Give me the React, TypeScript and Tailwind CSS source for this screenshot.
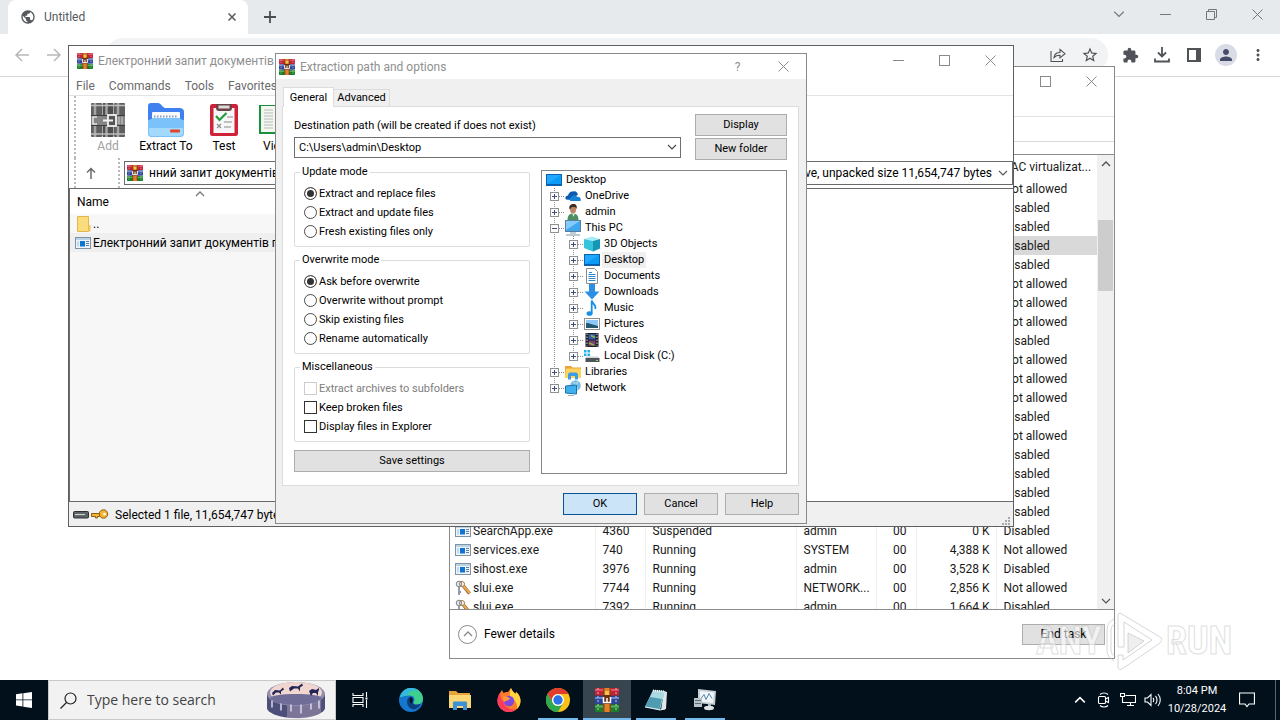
import React, { useState } from 'react';
import { MdExtension, MdMoreVert, MdPerson, MdPublic, MdStarBorder } from 'react-icons/md';

type IconProps = { className?: string };

interface Process {
  name?: string;
  icon?: 'app' | 'key';
  pid?: string;
  status?: string;
  user?: string;
  cpu?: string;
  memory?: string;
  uac: string;
  selected?: boolean;
}

interface TreeNode {
  label: string;
  icon: React.ReactNode;
  depth: number;
  open?: boolean;
  selected?: boolean;
}

/* ---------- Icons ---------- */

const RarIcon = ({ className = 'size-4' }: IconProps) => (
  <svg viewBox="0 0 24 24" className={className}>
    <rect x="0" y="0" width="24" height="7.500" rx="1" fill="#c3213a" />
    <rect x="0" y="1" width="24" height="2" fill="#e0506a" />
    <rect x="0" y="8" width="24" height="8" rx="1" fill="#2c459c" />
    <rect x="0" y="9" width="24" height="2" fill="#6b86d4" />
    <rect x="0" y="16.500" width="24" height="7.500" rx="1" fill="#17802c" />
    <rect x="0" y="17.500" width="24" height="2" fill="#4fb35f" />
    <path d="M3 0v24M21 0v24" stroke="#d9c79a" strokeWidth="1" strokeDasharray="2 2" />
    <rect x="8" y="0" width="8" height="24" fill="#8f4513" />
    <rect x="9.500" y="0" width="5" height="24" fill="#e0802c" />
    <rect x="8" y="7" width="8" height="9" fill="#6d2f12" />
    <path d="M8.500 9v5.500h7V9M12 10v4" fill="none" stroke="#fff" strokeWidth="1.500" />
    <rect x="10" y="3" width="4" height="4" fill="#f5c34a" />
  </svg>
);

const AppIcon = () => (
  <svg viewBox="0 0 16 12" className="h-3 w-4 shrink-0">
    <rect x="0.5" y="0.5" width="15" height="11" fill="#eef4f9" stroke="#7f93a3" />
    <rect x="1" y="1" width="14" height="2" fill="#bcd3e6" />
    <rect x="5" y="4" width="5" height="5.5" fill="#0f74d1" />
    <path d="M11 4.5h3M11 6.5h3M11 8.5h3" stroke="#5b7fa0" />
    <rect x="2" y="4" width="2" height="5.5" fill="#bcdcf4" />
  </svg>
);

const KeyIcon = () => (
  <svg viewBox="0 0 16 16" className="size-4 shrink-0">
    <circle cx="4" cy="4" r="2.8" fill="#e2e5ec" stroke="#7c8296" />
    <path d="M4 7v8M4 12h2" stroke="#8b90a6" strokeWidth="1.8" />
    <circle cx="7" cy="4" r="2.5" fill="none" stroke="#9a7a45" />
    <path d="M8.5 6l6 7.5" stroke="#8a5a22" strokeWidth="3.4" />
    <path d="M8.5 6l6 7" stroke="#f1ab55" strokeWidth="2" />
  </svg>
);

const ChevronDown = ({ className = 'size-2.5' }: IconProps) => (
  <svg viewBox="0 0 10 10" className={className}>
    <path d="M1 3l4 4 4-4" fill="none" stroke="currentColor" strokeWidth="1.1" />
  </svg>
);

const ChevronUp = ({ className = 'size-2.5' }: IconProps) => (
  <svg viewBox="0 0 10 10" className={className}>
    <path d="M1 7l4-4 4 4" fill="none" stroke="currentColor" strokeWidth="1.3" />
  </svg>
);

const CloseGlyph = ({ className = 'size-[11px]' }: IconProps) => (
  <svg viewBox="0 0 11 11" className={className}>
    <path d="M0.5 0.5l10 10M10.5 0.5l-10 10" stroke="currentColor" strokeWidth="1" />
  </svg>
);

const MaxGlyph = () => (
  <svg viewBox="0 0 11 11" className="size-[11px]">
    <rect x="0.5" y="0.5" width="10" height="10" fill="none" stroke="currentColor" />
  </svg>
);

const MinGlyph = () => (
  <svg viewBox="0 0 11 11" className="size-[11px]">
    <path d="M0 5.5h11" stroke="currentColor" />
  </svg>
);

const RestoreGlyph = () => (
  <svg viewBox="0 0 11 11" className="size-[11px]">
    <path d="M0.5 2.5h8v8h-8zM2.5 2.5v-2h8v8h-2" fill="none" stroke="currentColor" />
  </svg>
);

const MonitorIcon = () => (
  <svg viewBox="0 0 16 16" className="size-4">
    <rect x="0.5" y="2.5" width="15" height="11" fill="#0a9bf7" stroke="#0a62b0" />
    <path d="M1 3h14L1 12z" fill="#22a9ff" />
    <path d="M1 12.5h14" stroke="#0a5ca8" />
  </svg>
);

const ComputerIcon = () => (
  <svg viewBox="0 0 16 16" className="size-4">
    <rect x="0.5" y="0.5" width="15" height="11" fill="#3fa7ee" stroke="#5c7f9b" />
    <path d="M1 1h14L1 10z" fill="#84cbfb" />
    <path d="M5 13h6" stroke="#a9bac7" strokeWidth="1.4" />
    <path d="M1 15h14" stroke="#7d95a7" />
  </svg>
);

const CloudIcon = () => (
  <svg viewBox="0 0 16 16" className="size-4">
    <path d="M1 11.500c-1.500-2 0-3.600 2-4C3.500 5 5.500 3 8 3.500c2-1 4 0 5 3L6 12z" fill="#0b5cad" />
    <path d="M5.500 13C4 12 4.500 9.500 6.500 9.300 7 7 10.500 6.500 12 8.800c3-.3 4.500 1.700 3.500 4.200z" fill="#1683d8" />
  </svg>
);

const UserIcon = () => (
  <svg viewBox="0 0 16 16" className="size-4">
    <path d="M2.500 16c0-4 1.500-6.500 5.500-6.500s5.500 2.500 5.500 6.500z" fill="#4c8f63" />
    <path d="M7 9l1.500 4L10 9z" fill="#dfeee3" />
    <ellipse cx="8" cy="5.500" rx="3" ry="4" fill="#b98562" />
    <path d="M4.500 5.500C3.500 1.500 6 0 8.500 0S12.500 2 11.500 5L10 3H7z" fill="#3e2c20" />
  </svg>
);

const CubeIcon = () => (
  <svg viewBox="0 0 16 16" className="size-4">
    <path d="M0 3l8-2.500L16 3 9 5z" fill="#a7ecf3" />
    <path d="M0 3l9 2v10.500L0 12z" fill="#36c3dc" />
    <path d="M9 5l7-2v9.500l-7 3z" fill="#1596b5" />
  </svg>
);

const DocumentIcon = () => (
  <svg viewBox="0 0 16 16" className="size-4">
    <path d="M2.500 0.500h8l3 3v12h-11z" fill="#fff" stroke="#8b8b8b" />
    <path d="M5 4.500h3M4.500 6.500h7M4.500 8.500h7M4.500 10.500h7M4.500 12.500h7" stroke="#2a86cf" />
  </svg>
);

const DownloadIcon = () => (
  <svg viewBox="0 0 16 16" className="size-4">
    <path d="M5 0h6v7.500h4.500L8 15.500.5 7.500H5z" fill="#2b8fe4" />
  </svg>
);

const MusicIcon = () => (
  <svg viewBox="0 0 16 16" className="size-4">
    <ellipse cx="5.500" cy="13.500" rx="3" ry="2.300" fill="#1590e6" />
    <path d="M7.700 13.500V0.500c.5 3.500 5 4 3.500 8.500" fill="none" stroke="#1590e6" strokeWidth="1.800" />
  </svg>
);

const PictureIcon = () => (
  <svg viewBox="0 0 16 16" className="size-4">
    <rect x="0.500" y="2.500" width="15" height="11" fill="#fff" stroke="#8f8f8f" />
    <rect x="2" y="4" width="12" height="8" fill="#8ccaf5" />
    <path d="M2 7c4 0 7 2 12 3v2H2z" fill="#27566f" />
  </svg>
);

const VideoIcon = () => (
  <svg viewBox="0 0 16 16" className="size-4">
    <rect x="1.500" y="1" width="13" height="14" fill="#1c1c24" />
    <path d="M3 1.500v13M13 1.500v13" stroke="#d8d8d8" strokeDasharray="1.500 1.500" />
    <rect x="4.500" y="2" width="7" height="5.500" fill="#3b56a8" />
    <rect x="4.500" y="8.500" width="7" height="5.500" fill="#7a3e74" />
    <path d="M7 3.500l4 2M5 11l5 2" stroke="#7fbf3f" strokeWidth="1.500" />
  </svg>
);

const DiskIcon = () => (
  <svg viewBox="0 0 16 16" className="size-4">
    <path d="M0 2h2.500v2.500H0zM3.500 2H6v2.500H3.500zM0 5.500h2.500V8H0zM3.500 5.500H6V8H3.500z" fill="#22b1e6" />
    <path d="M2 8.500h12l1.500 2h-14z" fill="#cfd4d8" />
    <rect x="1.500" y="10" width="14" height="4" fill="#4d555b" />
    <path d="M12 12.500h2" stroke="#6be06b" />
  </svg>
);

const FolderIcon = () => (
  <svg viewBox="0 0 16 16" className="size-4">
    <path d="M0 2h6l1.500 1.500H16V14H0z" fill="#e9a43a" />
    <path d="M1 4.500h15V14H0z" fill="#ffd45e" />
    <path d="M3 15.500V11c0-1.500 1-2.500 2-2.500h6c1 0 2 1 2 2.500v4.500h-3V12H6v3.500z" fill="#3b9de6" />
  </svg>
);

const NetworkIcon = () => (
  <svg viewBox="0 0 16 16" className="size-4">
    <circle cx="10.500" cy="5.500" r="5.300" fill="#79bde0" />
    <path d="M8 2c3 1 3 5 1 8M13 1.500c-2 2-2 6 0 8" stroke="#d6edf7" fill="none" />
    <path d="M0.500 6l11-1v9l-11-1z" fill="#3fb0ec" stroke="#1673b0" />
    <path d="M3 15.500h6" stroke="#9fb4c0" />
  </svg>
);

/* ---------- Chrome ---------- */

const ChromeWindow = () => (
  <div className="flex flex-1 flex-col">
    <div className="flex h-[34px] items-stretch justify-between bg-[#e7eaed]">
      <div className="flex items-end pl-2">
        <div className="flex h-[34px] w-60 items-center gap-2 rounded-t-lg bg-white pl-3 pr-2.5 text-[#55595e]">
          <MdPublic className="size-4" />
          <span className="flex-1 text-xs">Untitled</span>
          <button aria-label="Close tab" className="flex size-3 items-center justify-center">
            <svg viewBox="0 0 8 8" className="size-2">
              <path d="M0.500 0.500l7 7M7.500 0.500l-7 7" stroke="currentColor" strokeWidth="1.500" />
            </svg>
          </button>
        </div>
        <button aria-label="New tab" className="flex h-[34px] w-11 items-center justify-center text-[#4a4e52]">
          <svg viewBox="0 0 12 12" className="size-3">
            <path d="M6 0v12M0 6h12" stroke="currentColor" strokeWidth="1.800" />
          </svg>
        </button>
      </div>
      <div className="flex h-7 text-[#73777b]">
        <button aria-label="Search tabs" className="flex w-[46px] items-center justify-center">
          <ChevronDown className="size-3" />
        </button>
        <button aria-label="Minimize" className="flex w-[46px] items-center justify-center"><MinGlyph /></button>
        <button aria-label="Restore" className="flex w-[46px] items-center justify-center"><RestoreGlyph /></button>
        <button aria-label="Close" className="flex w-[46px] items-center justify-center"><CloseGlyph /></button>
      </div>
    </div>

    <div className="flex h-[43px] items-center border-b border-[#d5d7da] bg-white pl-1.5 pr-1.5 text-[#4f5357]">
      <div className="flex text-[#b5b8bb]">
        <button aria-label="Back" className="flex size-8 items-center justify-center">
          <svg viewBox="0 0 14 14" className="size-[14px]">
            <path d="M14 7H1.500M7 1L1 7l6 6" fill="none" stroke="currentColor" strokeWidth="1.500" />
          </svg>
        </button>
        <button aria-label="Forward" className="flex size-8 items-center justify-center">
          <svg viewBox="0 0 14 14" className="size-[14px]">
            <path d="M0 7h12.500M7 1l6 6-6 6" fill="none" stroke="currentColor" strokeWidth="1.500" />
          </svg>
        </button>
      </div>
      <div className="ml-9 flex h-[34px] flex-1 items-center justify-end rounded-full bg-[#f1f3f4] pr-0.5">
        <button aria-label="Share" className="flex size-8 items-center justify-center">
          <svg viewBox="0 0 16 14" className="h-[14px] w-4" fill="none" stroke="currentColor" strokeWidth="1.100">
            <path d="M1 3v10.500h11.500V11" />
            <path d="M4 9.500C4.500 6 6.500 4.500 10 4.500V1.500l5 4.200-5 4.200V7.300C7.500 7.200 5.500 8 4 9.500z" />
          </svg>
        </button>
        <button aria-label="Bookmark" className="flex size-8 items-center justify-center">
          <MdStarBorder className="size-[18px]" />
        </button>
      </div>
      <div className="ml-1.5 flex">
        <button aria-label="Extensions" className="flex size-8 items-center justify-center">
          <MdExtension className="size-[17px]" />
        </button>
        <button aria-label="Downloads" className="flex size-8 items-center justify-center">
          <svg viewBox="0 0 16 16" className="size-4" fill="none" stroke="currentColor" strokeWidth="1.800">
            <path d="M8 0v9M4 5.500l4 4 4-4M1 11.500v3h14v-3" />
          </svg>
        </button>
        <button aria-label="Side panel" className="flex size-8 items-center justify-center">
          <svg viewBox="0 0 14 14" className="size-[14px]">
            <path d="M1 1h12v12H1z" fill="none" stroke="currentColor" strokeWidth="2" />
            <path d="M9 0h5v14H9z" fill="currentColor" />
          </svg>
        </button>
        <button aria-label="Profile" className="flex size-8 items-center justify-center">
          <span className="flex size-[22px] items-center justify-center rounded-full bg-[#dadce5]">
            <MdPerson className="size-[18px] text-[#454a6b]" />
          </span>
        </button>
        <button aria-label="Menu" className="flex size-8 items-center justify-center">
          <MdMoreVert className="size-[18px]" />
        </button>
      </div>
    </div>
  </div>
);

/* ---------- Task Manager ---------- */

const processes: Process[] = [
  { uac: 'Not allowed' },
  { uac: 'Disabled' },
  { uac: 'Disabled' },
  { uac: 'Disabled', selected: true },
  { uac: 'Disabled' },
  { uac: 'Not allowed' },
  { uac: 'Not allowed' },
  { uac: 'Not allowed' },
  { uac: 'Disabled' },
  { uac: 'Not allowed' },
  { uac: 'Not allowed' },
  { uac: 'Not allowed' },
  { uac: 'Disabled' },
  { uac: 'Not allowed' },
  { uac: 'Disabled' },
  { uac: 'Disabled' },
  { uac: 'Disabled' },
  { uac: 'Disabled' },
  { name: 'SearchApp.exe', icon: 'app', pid: '4360', status: 'Suspended', user: 'admin', cpu: '00', memory: '0 K', uac: 'Disabled' },
  { name: 'services.exe', icon: 'app', pid: '740', status: 'Running', user: 'SYSTEM', cpu: '00', memory: '4,388 K', uac: 'Not allowed' },
  { name: 'sihost.exe', icon: 'app', pid: '3976', status: 'Running', user: 'admin', cpu: '00', memory: '3,528 K', uac: 'Disabled' },
  { name: 'slui.exe', icon: 'key', pid: '7744', status: 'Running', user: 'NETWORK...', cpu: '00', memory: '2,856 K', uac: 'Not allowed' },
  { name: 'slui.exe', icon: 'key', pid: '7392', status: 'Running', user: 'admin', cpu: '00', memory: '1,664 K', uac: 'Disabled' },
];

const TaskManagerWindow = () => (
  <section className="absolute left-[449px] top-[66px] flex w-[666px] flex-col border border-[#8a8a8a] bg-white">
    <div className="flex h-[50px] items-start justify-end border-b border-[#e3e3e3] text-[#8a8a8a]">
      <button aria-label="Maximize" className="flex h-7 w-[46px] items-center justify-center"><MaxGlyph /></button>
      <button aria-label="Close" className="flex h-7 w-[46px] items-center justify-center"><CloseGlyph /></button>
    </div>
    <div className="h-[25px] border-b border-[#d9d9d9]" />
    <div className="h-3" />
    <div className="flex h-[456px] border-y border-[#8c8c8c]">
      <div className="flex-1 overflow-hidden">
        <table className="w-full table-fixed text-xs text-[#1a1a1a]">
          <colgroup>
            <col className="w-[145px]" />
            <col className="w-[50px]" />
            <col className="w-[151px]" />
            <col className="w-20" />
            <col className="w-10" />
            <col className="w-20" />
            <col />
          </colgroup>
          <thead>
            <tr className="h-6">
              <th colSpan={6} />
              <th className="whitespace-nowrap p-0 pl-[7px] text-left font-normal">UAC virtualizat...</th>
            </tr>
          </thead>
          <tbody>
            {processes.map((p, i) => (
              <tr key={i} className={p.selected ? 'h-[19px] bg-[#d9d9d9]' : 'h-[19px]'}>
                <td className="border-r border-[#efefef] p-0 pl-[5px]">
                  <div className="flex h-[19px] items-center gap-0.5">
                    {p.icon === 'app' && <AppIcon />}
                    {p.icon === 'key' && <KeyIcon />}
                    {p.name}
                  </div>
                </td>
                <td className="border-r border-[#efefef] p-0 pl-[7px]">{p.pid}</td>
                <td className="border-r border-[#efefef] p-0 pl-[7px]">{p.status}</td>
                <td className="border-r border-[#efefef] p-0 pl-[7px]">{p.user}</td>
                <td className="border-r border-[#efefef] p-0 pr-[9px] text-right">{p.cpu}</td>
                <td className="border-r border-[#efefef] p-0 pr-1.5 text-right">{p.memory}</td>
                <td className="p-0 pl-[7px]">{p.uac}</td>
              </tr>
            ))}
          </tbody>
        </table>
      </div>
      <div className="flex w-[17px] flex-col items-center bg-[#f0f0f0] text-[#505050]">
        <span className="flex h-[17px] items-center"><ChevronUp /></span>
        <span className="mt-12 h-[71px] w-[15px] bg-[#cdcdcd]" />
        <span className="mt-auto flex h-[17px] items-center"><ChevronDown /></span>
      </div>
    </div>
    <div className="flex h-12 items-center justify-between pl-2 pr-[9px] text-xs">
      <button className="flex items-center gap-[7px]">
        <span className="flex size-[19px] items-center justify-center rounded-full border border-[#8a8a8a] text-[#8a8a8a]">
          <ChevronUp />
        </span>
        Fewer details
      </button>
      <button className="h-[21px] w-[83px] border border-[#adadad] bg-[#e1e1e1]">End task</button>
    </div>
  </section>
);

/* ---------- WinRAR ---------- */

const AddArt = () => (
  <svg viewBox="0 0 34 34" className="size-[34px]">
    <rect x="0" y="0" width="11" height="34" rx="1" fill="#5f5f5f" />
    <rect x="11.500" y="0" width="11" height="34" rx="1" fill="#4f4f4f" />
    <rect x="23" y="0" width="11" height="34" rx="1" fill="#5f5f5f" />
    <path d="M4 0v34M15.500 0v34M27 0v34" stroke="#a5a5a5" strokeWidth="2.500" />
    <path d="M0 2.500h34M0 31h34" stroke="#bdbdbd" strokeWidth="1.500" />
    <rect x="0" y="12" width="34" height="11" fill="#858585" />
    <path d="M0 12.500h34M0 22.500h34" stroke="#3d3d3d" />
    <path d="M6 14H2v7h4" fill="none" stroke="#e4e4e4" strokeWidth="1.500" />
    <rect x="17" y="12" width="8" height="11" fill="#555" stroke="#f2f2f2" strokeWidth="1.800" />
    <path d="M12 17.500h10" stroke="#f2f2f2" strokeWidth="2" />
    <path d="M28 14v7M31 14v7" stroke="#d0d0d0" />
  </svg>
);

const ExtractArt = () => (
  <svg viewBox="0 0 36 34" className="h-[34px] w-9">
    <path d="M0 3c0-2 1-3 3-3h7c3 0 4 4 7 5h14c3 0 5 1 5 4v14H0z" fill="#3f7ff0" />
    <rect x="4" y="9" width="28" height="10" rx="1" fill="#f7f9fd" />
    <path d="M6 13.500h24" stroke="#8f9db8" strokeWidth="2" strokeDasharray="1.500 1.500" />
    <path d="M0 17c3 0 3-2 6-2h24c3 0 3 2 6 2v13c0 3-1 4-4 4H4c-3 0-4-1-4-4z" fill="#7cc2fa" />
    <path d="M1 25h34v5c0 2-1 3-3 3H4c-2 0-3-1-3-3z" fill="#a3d9fd" />
    <rect x="22" y="26.500" width="10" height="3" rx="1" fill="#e04628" />
  </svg>
);

const TestArt = () => (
  <svg viewBox="0 0 28 34" className="h-[34px] w-7">
    <rect x="0" y="1" width="28" height="32" rx="2.500" fill="#cf2138" />
    <rect x="3.500" y="5" width="21" height="25" fill="#f7f7f7" />
    <path d="M6 1h16v4c0 2-1 3-3 3H9c-2 0-3-1-3-3z" fill="#6d4348" />
    <path d="M8.500 2.500h11v3h-11z" fill="#dcdcdc" />
    <path d="M6 13l3.500 4 7-7" fill="none" stroke="#249a3c" strokeWidth="2.200" />
    <path d="M17 14h6M14 19h8M14 24h7M7 21l4 4M11 21l-4 4" stroke="#8c8c8c" strokeWidth="1.200" />
  </svg>
);

const ViewArt = () => (
  <svg viewBox="0 0 34 34" className="size-[34px]">
    <path d="M0 2h34v29H0z" fill="#18913a" />
    <path d="M2 3h14v26H2zM18 3h14v26H18z" fill="#f4f6f1" />
    <path d="M5 7h9M5 10h9M5 13h9M5 16h9M5 19h9M5 22h9M5 25h9" stroke="#b4bdb4" />
  </svg>
);

const toolbar = [
  { label: 'Add', art: <AddArt />, width: 'w-[58px]', disabled: true },
  { label: 'Extract To', art: <ExtractArt />, width: 'w-[58px]' },
  { label: 'Test', art: <TestArt />, width: 'w-[58px]' },
  { label: 'View', art: <ViewArt />, width: 'w-[46px]' },
];

const WinRarWindow = () => (
  <section className="absolute left-[68px] top-[45px] flex w-[946px] flex-col border border-[#5f5f5f] bg-white">
    <header className="flex h-[30px] items-center">
      <h1 className="flex flex-1 items-center gap-[5px] pl-2 text-xs text-[#8f8f8f]">
        <RarIcon />
        Електронний запит документів по
      </h1>
      <div className="flex h-7 self-start text-[#8a8a8a]">
        <button aria-label="Minimize" className="flex w-[46px] items-center justify-center"><MinGlyph /></button>
        <button aria-label="Maximize" className="flex w-[46px] items-center justify-center"><MaxGlyph /></button>
        <button aria-label="Close" className="flex w-[46px] items-center justify-center"><CloseGlyph /></button>
      </div>
    </header>
    <nav className="flex h-5 items-center gap-3.5 border-b border-[#e3e3e3] pl-[7px] text-xs text-[#6a6a6a]">
      {['File', 'Commands', 'Tools', 'Favorites'].map((item) => (
        <button key={item}>{item}</button>
      ))}
    </nav>

    <div className="flex h-[62px] pl-[5px]">
      <div className="border-l-2 border-dotted border-[#b9b9b9]" />
      <div className="flex pl-[3px] pt-[7px]">
        {toolbar.map((t) => (
          <button
            key={t.label}
            disabled={t.disabled}
            className={`flex flex-col items-center whitespace-nowrap text-xs leading-[18px] disabled:text-[#a0a0a0] ${t.width}`}
          >
            {t.art}
            {t.label}
          </button>
        ))}
      </div>
    </div>

    <div className="flex h-[30px] pl-[5px]">
      <div className="border-l-2 border-dotted border-[#b9b9b9]" />
      <button aria-label="Up" className="flex w-[30px] items-center justify-center text-[#6a6a6a]">
        <svg viewBox="0 0 10 12" className="h-3 w-2.5">
          <path d="M5 12V1.500M1 5.500l4-4 4 4" fill="none" stroke="currentColor" strokeWidth="1.500" />
        </svg>
      </button>
      <div className="ml-3 border-l-2 border-dotted border-[#b9b9b9]" />
      <div className="ml-1 mt-[3px] flex h-6 flex-1 items-center border border-[#6a6a6a] pl-0.5 pr-1 text-xs">
        <RarIcon />
        <select aria-label="Archive" className="ml-1.5 flex-1 appearance-none outline-none">
          <option>нний запит документів по</option>
        </select>
        <span>archive, unpacked size 11,654,747 bytes</span>
        <ChevronDown className="ml-1.5 size-2.5 text-[#555]" />
      </div>
    </div>

    <div className="flex h-[314px] border-y border-[#6a6a6a]">
      <div className="w-[440px] border-l border-[#6a6a6a] bg-[#f7f7f7]">
        <div className="relative h-[25px] bg-white pl-[7px] pt-[5px] text-xs">
          Name
          <ChevronUp className="absolute left-[125px] top-0 size-2.5 text-[#777]" />
        </div>
        <div className="flex h-[19px] items-center gap-0.5 pl-[7px] text-xs">
          <svg viewBox="0 0 14 16" className="h-4 w-[14px]">
            <path d="M0.500 0.500h11v15h-11z" fill="#fbdc7c" stroke="#e2b64a" />
            <path d="M11.500 9h2v6.500h-2z" fill="#efc65b" />
          </svg>
          ..
        </div>
        <div className="flex h-[19px] items-center gap-0.5 bg-[#efefef] pl-[5px] text-xs">
          <AppIcon />
          Електронний запит документів по
        </div>
      </div>
      <div className="flex-1 bg-white" />
    </div>

    <footer className="flex h-6 items-center bg-[#f0f0f0] pl-1 pt-0.5 text-xs">
      <svg viewBox="0 0 16 8" className="h-2 w-4">
        <rect x="0.500" y="0.500" width="15" height="6.500" rx="1" fill="#5d6468" stroke="#2c3033" />
        <path d="M2 3.500h10" stroke="#d4d8da" />
      </svg>
      <svg viewBox="0 0 18 12" className="ml-0.5 h-3 w-[18px]">
        <circle cx="12.500" cy="5" r="4.200" fill="#f2b632" stroke="#8b5d10" />
        <path d="M0.500 4.500h8v3h-2v1.500h-2V7.500h-4z" fill="#f2b632" stroke="#8b5d10" />
        <circle cx="13.500" cy="5" r="1.300" fill="#fff" />
      </svg>
      <span className="ml-1.5 flex-1">Selected 1 file, 11,654,747 bytes</span>
      <svg viewBox="0 0 10 10" className="mr-0.5 size-2.5 self-end fill-[#a8a8a8]">
        <path d="M7 1h2v2H7zM4 4h2v2H4zM7 4h2v2H7zM1 7h2v2H1zM4 7h2v2H4zM7 7h2v2H7z" />
      </svg>
    </footer>
  </section>
);

/* ---------- Extraction dialog ---------- */

const tree: TreeNode[] = [
  { label: 'Desktop', icon: <MonitorIcon />, depth: 0 },
  { label: 'OneDrive', icon: <CloudIcon />, depth: 1 },
  { label: 'admin', icon: <UserIcon />, depth: 1 },
  { label: 'This PC', icon: <ComputerIcon />, depth: 1, open: true },
  { label: '3D Objects', icon: <CubeIcon />, depth: 2 },
  { label: 'Desktop', icon: <MonitorIcon />, depth: 2, selected: true },
  { label: 'Documents', icon: <DocumentIcon />, depth: 2 },
  { label: 'Downloads', icon: <DownloadIcon />, depth: 2 },
  { label: 'Music', icon: <MusicIcon />, depth: 2 },
  { label: 'Pictures', icon: <PictureIcon />, depth: 2 },
  { label: 'Videos', icon: <VideoIcon />, depth: 2 },
  { label: 'Local Disk (C:)', icon: <DiskIcon />, depth: 2 },
  { label: 'Libraries', icon: <FolderIcon />, depth: 1 },
  { label: 'Network', icon: <NetworkIcon />, depth: 1 },
];

const Expander = ({ open, last }: { open?: boolean; last?: boolean }) => (
  <svg viewBox="0 0 15 16" className="h-4 w-[15px]" fill="none">
    <path d={last ? 'M4.500 0v8' : 'M4.500 0v16'} stroke="#8c8c8c" strokeDasharray="1 1" />
    <path d="M9 8.500h6" stroke="#8c8c8c" strokeDasharray="1 1" />
    <rect x="0.500" y="4.500" width="8" height="8" fill="#fbfbfb" stroke="#919191" />
    <path d={open ? 'M2 8.500h5' : 'M2 8.500h5M4.500 6v5'} stroke="#44507c" />
  </svg>
);

const FolderTree = () => (
  <ul className="mt-2.5 flex-1 border border-[#82868b] pl-1 pt-px">
    {tree.map((node, i) => (
      <li key={i} className="flex h-4 items-center">
        {node.depth > 0 && <span className="w-1" />}
        {node.depth === 2 && (
          <svg viewBox="0 0 19 16" className="h-4 w-[19px]">
            <path d="M4.500 0v16" stroke="#8c8c8c" strokeDasharray="1 1" />
          </svg>
        )}
        {node.depth > 0 && <Expander open={node.open} last={i === 11 || i === 13} />}
        {node.icon}
        <span className={node.selected ? 'ml-0.5 bg-[#f0f0f0] px-0.5' : 'ml-0.5 px-0.5'}>{node.label}</span>
      </li>
    ))}
  </ul>
);

const Group = ({ title, children }: { title: string; children: React.ReactNode }) => (
  <fieldset className="rounded-[2px] border border-[#dcdcdc] pb-[5px] pl-[9px]">
    <legend className="-ml-1 px-0.5 leading-4">{title}</legend>
    <div className="pt-1">{children}</div>
  </fieldset>
);

const Radio = ({ name, label, checked }: { name: string; label: string; checked?: boolean }) => (
  <label className="flex h-[19px] items-center gap-0.5">
    <input
      type="radio"
      name={name}
      defaultChecked={checked}
      className="size-[13px] appearance-none rounded-full border border-[#4a4a4a] checked:bg-[#333] checked:shadow-[inset_0_0_0_2px_white]"
    />
    {label}
  </label>
);

const Check = ({ label, disabled }: { label: string; disabled?: boolean }) => (
  <label className={disabled ? 'flex h-[19px] items-center gap-0.5 text-[#7d7d7d]' : 'flex h-[19px] items-center gap-0.5'}>
    <input
      type="checkbox"
      disabled={disabled}
      className="size-[13px] appearance-none border border-[#333] bg-white disabled:border-[#cccccc]"
    />
    {label}
  </label>
);

const buttonClass = 'h-[22px] border border-[#adadad] bg-[#e1e1e1] text-center';

const ExtractDialog = () => {
  const [tab, setTab] = useState('General');

  return (
    <section
      role="dialog"
      aria-label="Extraction path and options"
      className="absolute left-[275px] top-[53px] flex w-[532px] flex-col border border-[#8a8a8a] bg-[#f0f0f0] text-[11px] leading-4 text-black"
    >
      <header className="flex h-[25px] items-center bg-white pl-[3px] text-xs text-[#8f8f8f]">
        <RarIcon />
        <h2 className="ml-[5px] flex-1">Extraction path and options</h2>
        <button aria-label="Help" className="w-[45px]">?</button>
        <button aria-label="Close" className="flex w-[46px] justify-center"><CloseGlyph /></button>
      </header>

      <div className="pb-2 pl-1.5 pr-[7px] pt-2">
        <div role="tablist" className="flex items-end pl-px">
          {['General', 'Advanced'].map((t) => (
            <button
              key={t}
              role="tab"
              aria-selected={tab === t}
              onClick={() => setTab(t)}
              className={
                tab === t
                  ? 'relative -mb-px h-5 w-[51px] border border-b-0 border-[#dcdcdc] bg-white'
                  : 'h-[17px] w-14 border border-b-0 border-l-0 border-[#dcdcdc]'
              }
            >
              {t}
            </button>
          ))}
        </div>

        <div className="border border-[#dcdcdc] bg-white px-[11px] pb-[11px] pt-[7px]">
          <div className="flex gap-3.5">
            <div className="flex flex-1 flex-col justify-end pb-0.5">
              <label htmlFor="dest" className="mb-[3px]">Destination path (will be created if does not exist)</label>
              <div className="relative">
                <select
                  id="dest"
                  className="block h-[21px] w-full appearance-none border border-[#6f6f6f] bg-white pl-1 outline-none"
                >
                  <option>C:\Users\admin\Desktop</option>
                </select>
                <ChevronDown className="pointer-events-none absolute right-1 top-[5px] size-2.5 text-[#444]" />
              </div>
            </div>
            <div className="flex w-[92px] flex-col gap-0.5">
              <button className={buttonClass}>Display</button>
              <button className={buttonClass}>New folder</button>
            </div>
          </div>

          <div className="flex gap-[11px]">
            <div className="flex w-[236px] flex-col gap-[5px] pt-1">
              <Group title="Update mode">
                <Radio name="update" label="Extract and replace files" checked />
                <Radio name="update" label="Extract and update files" />
                <Radio name="update" label="Fresh existing files only" />
              </Group>
              <Group title="Overwrite mode">
                <Radio name="overwrite" label="Ask before overwrite" checked />
                <Radio name="overwrite" label="Overwrite without prompt" />
                <Radio name="overwrite" label="Skip existing files" />
                <Radio name="overwrite" label="Rename automatically" />
              </Group>
              <Group title="Miscellaneous">
                <Check label="Extract archives to subfolders" disabled />
                <Check label="Keep broken files" />
                <Check label="Display files in Explorer" />
              </Group>
              <div className="flex flex-col pb-0.5 pt-[3px]">
                <button className={buttonClass}>Save settings</button>
              </div>
            </div>
            <FolderTree />
          </div>
        </div>

        <div className="flex justify-end gap-[7px] pt-[7px]">
          <button className="h-[22px] w-[74px] border border-[#0a5296] bg-[#cce4f7]">OK</button>
          <button className={`${buttonClass} w-[74px]`}>Cancel</button>
          <button className={`${buttonClass} w-[74px]`}>Help</button>
        </div>
      </div>
    </section>
  );
};

/* ---------- Taskbar ---------- */

const EdgeIcon = () => (
  <svg viewBox="0 0 24 24" className="size-6">
    <circle cx="12" cy="12" r="12" fill="#1577cf" />
    <path d="M1 9C3 3 7 0 12 0c7 0 12 5 12 10.500 0 4-3 6-6 6-3.500 0-4-1.500-3-3 1.500-3-.5-6-4-6C6 7.500 2 9 1 9z" fill="#3fcf8e" />
    <path d="M1 9C3 3 7 0 12 0c4 0 7 1.500 9 4-5-3-11-1-13 3.500z" fill="#35b8dd" />
    <path d="M8 14c0-3 1.500-5 4-5.500 2 .5 3 2.500 2 5-.8 2 1 3.200 3.500 3.200 2 0 3.500-.5 4.500-1.200-2 4.500-6 6.500-9 5.500-3-1-5-4-5-7z" fill="#0c3d7c" />
    <path d="M11.500 9.500c1.500 0 2.500 2 2 3.500-.5 1-1 2-.5 3-2-1-3-5-1.500-6.500z" fill="#03121f" />
  </svg>
);

const ExplorerIcon = () => (
  <svg viewBox="0 0 22 20" className="h-5 w-[22px]">
    <path d="M0 1h7l2 2h12v15H0z" fill="#e8a33d" />
    <path d="M0 5h22v13H0z" fill="#fcd775" />
    <path d="M4 20v-7c0-1 .5-1.500 1.500-1.500h11c1 0 1.500.5 1.500 1.500v7h-4v-4H8v4z" fill="#3c91d8" />
  </svg>
);

const FirefoxIcon = () => (
  <svg viewBox="0 0 24 24" className="size-6">
    <path d="M3 5l2-3 1.500 3C8 4 9 4 11 4l3-4c1 3 3 4 4.500 6L19 4c3 2 4.500 5.500 4.500 9C23.500 19.500 18 24 12 24S.5 19 .5 13C.5 9.500 1.500 7 3 5z" fill="#ff7a2a" />
    <path d="M14 0c1 3 3 4 4.500 6L19 4c3 2 4.500 5.500 4.500 9 0 3-1.500 6-3.500 8 1-6-3-10-7-12-.5-3 0-7 1-9z" fill="#ffd23e" />
    <path d="M.5 13c0 6 5 11 11.500 11 3 0 5-1 7-2.500-5 .5-11-1-12-7C5 12 3 9 3 5 1.500 7 .5 9.500.5 13z" fill="#ff3b5c" />
    <circle cx="12" cy="13" r="5.200" fill="#8148de" />
    <path d="M6 9c3-1 5 0 7 1.500-1 2-4 2-5.500 3.500C6 12.500 5.500 10.500 6 9z" fill="#ff9a35" />
  </svg>
);

const ChromeIcon = () => (
  <svg viewBox="0 0 24 24" className="size-6">
    <circle cx="12" cy="12" r="12" fill="#fbc116" />
    <path d="M1.600 6A12 12 0 0 1 22.400 6H12a6 6 0 0 0-5.200 9z" fill="#e33b2e" />
    <path d="M1.600 6A12 12 0 0 0 12 24l5.200-9A6 6 0 0 1 6.800 15z" fill="#2da94f" />
    <circle cx="12" cy="12" r="6" fill="#fff" />
    <circle cx="12" cy="12" r="4.700" fill="#2a74e8" />
  </svg>
);

const NotepadIcon = () => (
  <svg viewBox="0 0 24 24" className="size-6">
    <path d="M20 3l3 1-1 17-5 1z" fill="#dfe7e9" />
    <path d="M9 2l12 1-5 19-15-3z" fill="#a9d9e2" />
    <path d="M6 9l12 2-2.500 10L1 18.500z" fill="#4f9cb0" />
    <path d="M9 2.500l12 1" stroke="#f3f3f3" strokeWidth="2" strokeDasharray="1 1" />
    <path d="M1 19l15 3 5-1" fill="none" stroke="#e6eef0" />
  </svg>
);

const MonitorAppIcon = () => (
  <svg viewBox="0 0 24 24" className="size-6">
    <path d="M5 1l18 2-1 14-17-2z" fill="#c5ced3" />
    <path d="M7 3l14 1.500-1 10.500-13-1.500z" fill="#f2f6f8" />
    <path d="M8 10.500l3-4 2 5 3-6 3 5" fill="none" stroke="#4f87ad" />
    <path d="M1 10h8v9H1z" fill="#b8c1c6" />
    <path d="M2 12.500h6M2 15.500h6" stroke="#5d6b73" />
    <path d="M15 16h3v4h-3z" fill="#aeb8bd" />
    <ellipse cx="16" cy="20" rx="5" ry="2.200" fill="#dfe4e7" />
  </svg>
);

const CakeArt = () => (
  <svg viewBox="0 0 58 38" className="h-[38px] w-[58px]">
    <path d="M0 13v14c0 5 13 10 29 10s29-5 29-10V13z" fill="#4c4f7a" />
    <path d="M20 16v20.500c12 2 26 0 34-4.500V16z" fill="#9c90ac" opacity="0.600" />
    <ellipse cx="29" cy="13" rx="29" ry="12" fill="#8f8db0" />
    <ellipse cx="29" cy="11.500" rx="26" ry="10.500" fill="#f0d6cf" />
    <path d="M3 17c3-3 12-4 26-4s23 1 26 4c-4 5-13 7-26 7S7 22 3 17z" fill="#6f6c97" />
    <path d="M5 12l3-3 5 .5 3-3 1 2-3 2v3l-2-2H9l-3 3zM22 7l3-2 6 .5 4-3 1 2-3 2v4l-2-3h-4l-4 3zM42 10l3-2 4 1 3-2v2l-1 2v4l-2-3h-3l-2 3z" fill="#232555" />
    <path d="M5 20v6M14 23v6M24 24v6M34 24v8M44 23v5M52 20v7" stroke="#d7d8ea" strokeWidth="1.500" strokeLinecap="round" />
  </svg>
);

const pinned = [
  { label: 'Edge', icon: <EdgeIcon />, state: '' },
  { label: 'File Explorer', icon: <ExplorerIcon />, state: '' },
  { label: 'Firefox', icon: <FirefoxIcon />, state: '' },
  { label: 'Chrome', icon: <ChromeIcon />, state: 'open' },
  { label: 'WinRAR', icon: <RarIcon className="size-6" />, state: 'active' },
  { label: 'Notepad', icon: <NotepadIcon />, state: 'open' },
  { label: 'Task Manager', icon: <MonitorAppIcon />, state: 'open' },
];

const Taskbar = () => (
  <footer className="flex h-10 bg-[#01101b] text-white">
    <button aria-label="Start" className="flex w-12 items-center justify-center">
      <svg viewBox="0 0 16 16" className="size-4 fill-white">
        <path d="M0 2.200l6.500-.9v6.200H0zM7.300 1.200L16 0v7.500H7.300zM0 8.300h6.500v6.200L0 13.600zM7.300 8.300H16V16l-8.700-1.200z" />
      </svg>
    </button>
    <div className="flex w-72 items-center border border-[#c9c9c9] bg-[#f2f2f2] pl-[11px] pr-2.5">
      <svg viewBox="0 0 17 17" className="size-[17px] shrink-0">
        <circle cx="10.500" cy="6.500" r="5.500" fill="none" stroke="#222" strokeWidth="1.200" />
        <path d="M6.500 10.500L0.500 16.500" stroke="#222" strokeWidth="1.200" />
      </svg>
      <input
        aria-label="Search"
        placeholder="Type here to search"
        className="ml-2.5 w-0 flex-1 bg-transparent font-['Open_Sans',sans-serif] text-sm outline-none placeholder:text-[#444]"
      />
      <CakeArt />
    </div>
    <button aria-label="Task view" className="flex w-12 items-center justify-center">
      <svg viewBox="0 0 16 16" className="size-4" fill="none" stroke="#fff" strokeWidth="1.100">
        <path d="M1 1v2.500h10V1M1 15v-2.500h10V15M1 5.500h10v5H1zM14.500 0v5M14.500 8v8" />
        <path d="M13.500 5.500h2v2h-2z" fill="#fff" stroke="none" />
      </svg>
    </button>
    <div className="ml-[3px] flex flex-1 gap-px">
      {pinned.map((app) => (
        <button
          key={app.label}
          aria-label={app.label}
          className={
            app.state === 'active'
              ? 'flex w-12 items-center justify-center border-b-2 border-[#76b9ed] bg-[#37454e] pt-0.5'
              : 'flex w-12 flex-col items-center justify-between'
          }
        >
          {app.state === 'active' ? (
            app.icon
          ) : (
            <>
              <span className="flex flex-1 items-center">{app.icon}</span>
              <span className={app.state === 'open' ? '-mt-0.5 h-0.5 w-10 bg-[#76b9ed]' : ''} />
            </>
          )}
        </button>
      ))}
    </div>
    <div className="flex items-center text-xs">
      <span className="flex w-6 justify-center"><ChevronUp className="size-3" /></span>
      <svg viewBox="0 0 14 16" className="mx-[5px] h-4 w-[14px]" fill="none" stroke="#fff" strokeWidth="1.100">
        <rect x="1.500" y="4.500" width="7" height="7" rx="1" />
        <path d="M8.500 7l3-1.500v5L8.500 9M3 2.500C5 .5 9 .5 11 2.500M3 13.500c2 2 6 2 8 0" />
      </svg>
      <svg viewBox="0 0 16 16" className="mx-1 size-4" fill="none" stroke="#fff" strokeWidth="1.100">
        <path d="M5.500 3.500h10v7h-10M10.500 10.500v3M7 13.500h7M0.500 1.500h4v3h-4zM2.500 4.500v6h3" />
      </svg>
      <svg viewBox="0 0 17 14" className="mx-1 h-[14px] w-[17px]" fill="none" stroke="#fff" strokeWidth="1.100">
        <path d="M1 5h2.500L7 1.500v11L3.500 9H1zM9 5c1 1 1 3 0 4M11.500 3c2 2 2 6 0 8M14 1c3 3.500 3 8.500 0 12" />
      </svg>
      <div className="w-16 text-center text-[11px] leading-[18px]">
        <div>8:04 PM</div>
        <div>10/28/2024</div>
      </div>
      <button aria-label="Notifications" className="flex w-9 justify-center">
        <svg viewBox="0 0 16 16" className="size-4" fill="none" stroke="#fff" strokeWidth="1.200">
          <path d="M0.500 1h15v11H10l-2 2.500L6 12H0.500z" />
        </svg>
      </button>
      <span className="ml-2.5 h-full w-[5px] border-l border-[#5b646c]" />
    </div>
  </footer>
);

const Watermark = () => (
  <div className="pointer-events-none absolute bottom-[49px] right-12 flex items-center gap-1 font-['Liberation_Sans_Narrow','Roboto_Condensed','Open_Sans',sans-serif] text-[38px] font-bold leading-[60px] text-white/60 [-webkit-text-stroke:1px_rgba(190,190,190,0.5)]">
    <span>ANY</span>
    <svg viewBox="0 0 56 60" className="h-[60px] w-14" fill="none" stroke="#c4c4c4" strokeOpacity="0.700">
      <path d="M14 2l40 24c2 1 2 4 0 6L16 58c-2 1-4 0-4-2V44h5v5l29-20L18 11v25h-6V4c0-1 1-2 2-2z" fill="#fff" fillOpacity="0.600" />
      <path d="M8 8C1 12 1 16 1 22v16c0 5 1 8 7 12M10 12c-5 3-5 5-5 10v16c0 4 1 6 5 8" />
      <path d="M22 22l16 8-16 12z" fill="#e0e0e0" fillOpacity="0.500" />
    </svg>
    <span>RUN</span>
  </div>
);

export default function App() {
  return (
    <main className="relative flex min-h-screen flex-col overflow-hidden bg-white font-['Roboto',sans-serif] text-black">
      <ChromeWindow />
      <Taskbar />
      <TaskManagerWindow />
      <WinRarWindow />
      <ExtractDialog />
      <Watermark />
    </main>
  );
}
